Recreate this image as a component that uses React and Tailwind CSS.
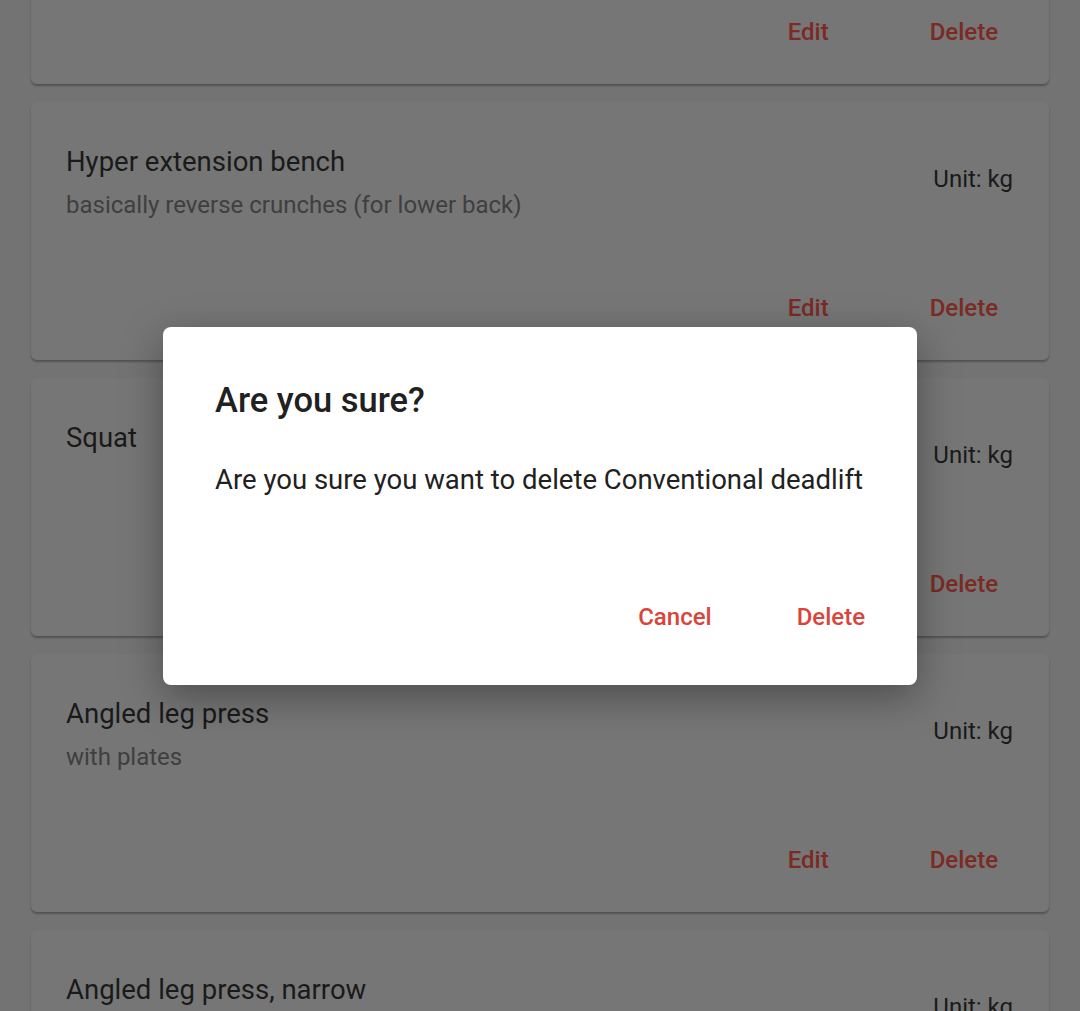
import React from "react";

const cards = [
  { title: "", sub: "" },
  { title: "Hyper extension bench", sub: "basically reverse crunches (for lower back)" },
  { title: "Squat", sub: "" },
  { title: "Angled leg press", sub: "with plates" },
  { title: "Angled leg press, narrow", sub: "" },
];

function Card({ title, sub }) {
  return (
    <div className="h-[258px] shrink-0 rounded-[6px] bg-[#767676] shadow-[0_2px_2px_rgba(0,0,0,0.28)] flex flex-col justify-between">
      <div className="flex justify-between pl-[35px] pr-[36px]">
        <div className="pt-[44px]">
          {title && <div className="text-[27.5px] leading-[32px] text-[#1a1a1a]">{title}</div>}
          {sub && <div className="mt-[13px] text-[24px] leading-[28px] text-[#3f3f3f]">{sub}</div>}
        </div>
        <div className="pt-[63px] text-[24px] leading-[28px] text-[#1a1a1a] whitespace-nowrap">Unit: kg</div>
      </div>
      <div className="flex justify-end gap-[101px] pr-[51px] pb-[38px] text-[24px] leading-[28px] font-medium text-[#7b2a24]">
        <span>Edit</span>
        <span>Delete</span>
      </div>
    </div>
  );
}

export default function App() {
  return (
    <div className="relative h-[1011px] w-[1080px] overflow-hidden bg-[#737373]" style={{ fontFamily: "Roboto, 'Noto Sans', sans-serif" }}>
      <div className="mt-[-174px] flex flex-col gap-[18px] px-[31px]">
        {cards.map((c, i) => (
          <Card key={i} {...c} />
        ))}
      </div>
      <div className="absolute inset-0 flex items-center justify-center">
        <div className="mt-[1px] w-[754px] h-[358px] rounded-[8px] bg-white px-[52px] pt-[53px] pb-[54px] shadow-[0_12px_40px_rgba(0,0,0,0.35)]">
          <div className="text-[34.5px] leading-[40px] font-medium text-[#212121]">Are you sure?</div>
          <div className="mt-[44px] text-[27.5px] leading-[32px] text-[#212121] whitespace-nowrap">
            Are you sure you want to delete Conventional deadlift
          </div>
          <div className="mt-[107px] flex justify-end gap-[85px] text-[24px] leading-[28px] font-medium text-[#d9453b]">
            <span>Cancel</span>
            <span>Delete</span>
          </div>
        </div>
      </div>
    </div>
  );
}
